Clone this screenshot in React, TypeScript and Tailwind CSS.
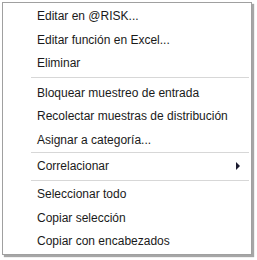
const groups = [
  { sep: "", items: ["Editar en @RISK...", "Editar función en Excel...", "Eliminar"] },
  { sep: "h-[6px]", items: ["Bloquear muestreo de entrada", "Recolectar muestras de distribución", "Asignar a categoría..."] },
  { sep: "h-[3px]", items: ["Correlacionar"] },
  { sep: "h-[4.5px]", items: ["Seleccionar todo", "Copiar selección", "Copiar con encabezados"] },
];

function App() {
  return (
    <div
      className="w-[257px] h-[260px] bg-white pl-[2px] pt-[2px] overflow-hidden"
      style={{ fontFamily: '"Liberation Sans", Arial, sans-serif' }}
    >
      <div className="w-[250px] h-[253px] bg-white border border-[#a0a0a0] shadow-[2px_2px_1px_rgba(0,0,0,0.35)] py-[1.25px] text-[12px] text-[#1a1a1a]">
        {groups.map((group, gi) => (
          <div key={gi}>
            {group.sep && (
              <div className={`${group.sep} flex items-center pl-[28px] pr-[2px]`}>
                <div className="h-px w-full bg-[#d7d7d7]" />
              </div>
            )}
            {group.items.map((item) => (
              <div key={item} className="h-[23.5px] flex items-center pl-[34px] pr-[10px] justify-between">
                <span>{item}</span>
                {item === "Correlacionar" && (
                  <svg width="5" height="8" viewBox="0 0 5 8">
                    <path d="M0 0 L4 4 L0 8 Z" fill="#1a1a2e" />
                  </svg>
                )}
              </div>
            ))}
          </div>
        ))}
      </div>
    </div>
  );
}

export default App;
